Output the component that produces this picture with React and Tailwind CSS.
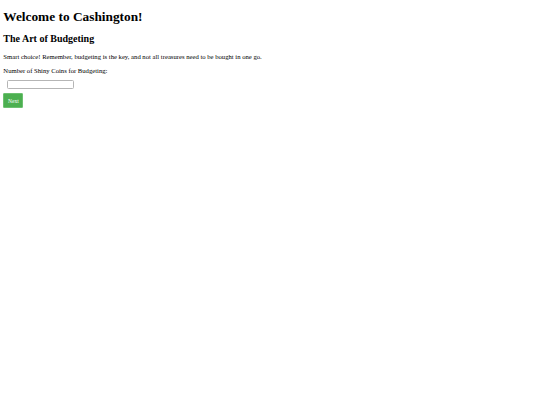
export default function App() {
  return (
    <div className="min-h-[405px] bg-white px-[3.33px] pt-[8.93px] text-black [font-family:'Liberation_Serif',serif]">
      <h1 className="text-[13.33px] font-bold leading-[1.15]">Welcome to Cashington!</h1>
      <h2 className="mt-[8.93px] text-[10px] font-bold leading-[1.15]">The Art of Budgeting</h2>
      <p className="mt-[8.3px] text-[6.67px] leading-[1.15]">
        Smart choice! Remember, budgeting is the key, and not all treasures need to be bought in one go.
      </p>
      <label className="mt-[6.67px] block text-[6.67px] leading-[1.15]">Number of Shiny Coins for Budgeting:</label>
      <input
        type="text"
        className="mx-[3.5px] mt-[5px] block h-[8.8px] w-[67px] rounded-[1.5px] border border-[#b5b5b5] bg-white"
      />
      <button className="mt-[4.5px] block h-[15px] w-[20px] rounded-[1px] border border-[#6cc070] bg-[#4caf50] text-[5.5px] text-white">
        Next
      </button>
    </div>
  )
}
